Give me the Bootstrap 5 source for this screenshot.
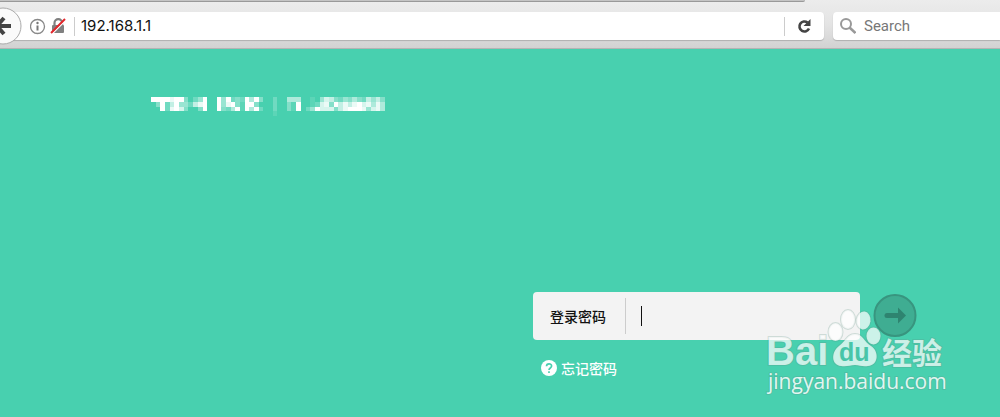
<!DOCTYPE html>
<html lang="zh-CN">
<head>
<meta charset="utf-8">
<meta name="viewport" content="width=device-width, initial-scale=1">
<title>192.168.1.1</title>
<link href="https://cdn.jsdelivr.net/npm/bootstrap@5.3.0/dist/css/bootstrap.min.css" rel="stylesheet">
<style>
  body { background: #48d0af; font-family: "Liberation Sans", "Noto Sans CJK SC", sans-serif; overflow-x: hidden; }
  .browser-bar { height: 49px; padding-top: 12px; background: linear-gradient(#ececec, #e4e4e4 50%, #d2d2d2); border-bottom: 1px solid #b4b4b4; font-family: Inter, Roboto, sans-serif; }
  .tab-edge { top: 0; left: 0; width: 80.5%; height: 2px; background: #c4c4c4; border-bottom: 1px solid #999; border-bottom-right-radius: 8px; }
  .field-box { height: 28px; background: #fff; box-shadow: 0 1px 1px #b0b0b0; }
  .address { width: 82.4%; border-radius: 0 4px 4px 0; }
  .search-box { border-radius: 4px 0 0 4px; margin-left: 9px; padding-left: 6px; }
  .field-box input { font-size: 15px; line-height: 20px; color: #111; background: none; outline: 0; min-width: 0; }
  .address input { margin-left: 6px; }
  .search-box input::placeholder { color: #777; opacity: 1; }
  .search-box input { font-family: Roboto, sans-serif; }
  .back-btn { width: 22px; height: 38px; }
  .bar-rule { width: 1px; height: 19px; background: #ccc; }
  .brand-row { padding: 45px 0 0 15.1%; height: 243px; }
  .login-area { margin-left: 53.3%; width: 384px; }
  .pass-box { width: 328px; height: 48px; background: #f3f3f3; border-radius: 4px; font-size: 14px; color: #111; }
  .pass-box label { width: 92px; padding-left: 17px; font-weight: 500; font-family: "Noto Sans CJK SC", sans-serif; }
  .pass-rule { width: 1px; height: 36px; background: #ccc; }
  .pass-box input { padding-left: 15px; outline: 0; min-width: 0; height: 32px; }
  .caret { width: 1px; height: 20px; margin-left: 15px; background: #111; }
  .go-btn { width: 44px; height: 44px; margin-left: 13px; }
  .forgot { margin: 18px 0 0 8px; font: 500 14px/20px "Noto Sans CJK SC", sans-serif; color: #fff; }
  .watermark { left: 764px; top: 304px; pointer-events: none; }
</style>
</head>
<body>
<header class="browser-bar d-flex position-relative">
  <div class="tab-edge position-absolute"></div>
  <div class="field-box address d-flex align-items-center flex-shrink-0">
    <button class="back-btn btn p-0 border-0 d-flex flex-shrink-0" aria-label="Back">
      <svg width="22" height="38" viewBox="0 0 22 38"><circle cx="3" cy="19" r="18" fill="#fafafa" stroke="#aaa"/><path d="M11 19H-2M4 11l-7 8 7 8" fill="none" stroke="#444" stroke-width="4"/></svg>
    </button>
    <svg class="flex-shrink-0 ms-2" width="16" height="17" viewBox="0 0 16 17"><circle cx="7.500" cy="8.500" r="7" fill="none" stroke="#888" stroke-width="1.300"/><path d="M7.500 7.500v5" stroke="#777" stroke-width="2"/><circle cx="7.500" cy="5" r="1.200" fill="#777"/></svg>
    <svg class="flex-shrink-0 ms-1" width="16" height="18" viewBox="0 0 16 18"><path d="M4.500 9V6a3.800 3.800 0 0 1 7.600 0v3" fill="none" stroke="#808080" stroke-width="2.200"/><rect x="2" y="8" width="12" height="8" rx="1" fill="#808080"/><path d="M2 17L16 3" stroke="#fff" stroke-width="1.500"/><path d="M1 16L15 2" stroke="#e2262b" stroke-width="2"/></svg>
    <span class="bar-rule ms-2"></span>
    <input class="border-0 p-0 flex-grow-1" type="text" value="192.168.1.1" aria-label="Address">
    <span class="bar-rule"></span>
    <button class="btn p-0 border-0 d-flex mx-2 px-1" aria-label="Reload">
      <svg width="15" height="16" viewBox="0 0 15 16"><path d="M12 10.500A5 5 0 1 1 10.500 4.500" fill="none" stroke="#444" stroke-width="2.600"/><path d="M13.500 1v7h-7z" fill="#444"/></svg>
    </button>
  </div>
  <div class="field-box search-box d-flex align-items-center flex-grow-1">
    <svg class="flex-shrink-0 me-2" width="17" height="18" viewBox="0 0 17 18"><circle cx="7" cy="7" r="5" fill="none" stroke="#999" stroke-width="2"/><path d="M10.500 10.500l6 5.500" stroke="#999" stroke-width="2.600"/></svg>
    <input class="border-0 p-0 w-100" type="search" placeholder="Search" aria-label="Search">
  </div>
</header>

<main>
  <div class="brand-row">
    <svg id="brand" width="236" height="19" viewBox="0 0 50.4 4" role="img" aria-label="Router brand"></svg>
  </div>
  <form class="login-area">
    <div class="d-flex align-items-center">
      <div class="pass-box d-flex align-items-center">
        <label for="pwd" class="flex-shrink-0">登录密码</label>
        <span class="pass-rule"></span>
        <span class="caret"></span>
        <input id="pwd" type="password" class="border-0 bg-transparent flex-grow-1">
      </div>
      <button type="button" class="go-btn btn p-0 border-0 d-flex flex-shrink-0" aria-label="登录">
        <svg width="44" height="44" viewBox="0 0 44 44"><circle cx="22" cy="21.500" r="20.500" fill="#3fad92" stroke="#38957f" stroke-width="2"/><path d="M14 21.500h14" stroke="#2e8470" stroke-width="5" stroke-linecap="round"/><path d="M25 13.500l8 8-8 8z" fill="#2e8470"/></svg>
      </button>
    </div>
    <a href="#" class="forgot d-inline-flex align-items-center text-decoration-none">
      <svg class="me-1" width="16" height="16" viewBox="0 0 16 16"><circle cx="8" cy="8" r="8" fill="#fff"/><path d="M5.500 6.300C5.500 3 10.600 3 10.600 6.100 10.600 8 8 8 8 10M8 11.200v1.800" fill="none" stroke="#48d0af" stroke-width="1.700"/></svg>
      忘记密码
    </a>
  </form>
</main>

<svg class="watermark position-absolute" width="190" height="96" viewBox="0 0 190 96" aria-hidden="true">
  <g fill="#fff" fill-opacity=".72" stroke="#5f9385" stroke-opacity=".25" stroke-width="2" paint-order="stroke">
    <text x="2" y="61" font-family="Liberation Sans, sans-serif" font-weight="700" font-size="40">Bai</text>
    <ellipse cx="71.500" cy="28" rx="7" ry="9"/>
    <ellipse cx="84" cy="15.500" rx="7" ry="9.500"/>
    <ellipse cx="99.500" cy="16.500" rx="7" ry="9" transform="rotate(8 99.500 16.500)"/>
    <ellipse cx="109.500" cy="32" rx="7" ry="8.500"/>
    <path d="M91 30C99 30 100 38 107 42C115 47 115 61 104 62C98 63 96 61 91 61C86 61 83 63 77 62C67 61 67 48 75 42C82 37 83 30 91 30Z"/>
    <text x="118" y="60" font-family="Noto Sans CJK SC, sans-serif" font-weight="700" font-size="30">经验</text>
    <text x="4" y="85" font-family="Open Sans, Noto Sans, sans-serif" font-size="21" font-weight="500" fill-opacity=".85">jingyan.baidu.com</text>
  </g>
  <text x="75" y="57" font-family="Liberation Sans, sans-serif" font-weight="700" font-size="25" fill="#48c5a8">du</text>
</svg>

<script src="https://cdn.jsdelivr.net/npm/bootstrap@5.3.0/dist/js/bootstrap.bundle.min.js"></script>
<script>
  // Brand mosaic: each digit is the brightness of one block, from 0 to 9.
  const rows = [
    "99998993024900949232959300200555001047632435326463",
    "03926944268900948931993000200319001278396868978585",
    "00928973003900932591959200200319024977736899984785",
    "00000000000000000000000000100000000000000000000000"
  ];
  const blocks = rows.flatMap((row, y) => [...row].map((v, x) =>
    v === "0" ? "" : `<rect x="${x}" y="${y}" width="1" height="1" fill="#fff" fill-opacity="${v / 9}"/>`));
  document.getElementById("brand").innerHTML = `<g shape-rendering="crispEdges">${blocks.join("")}</g>`;
</script>
</body>
</html>
